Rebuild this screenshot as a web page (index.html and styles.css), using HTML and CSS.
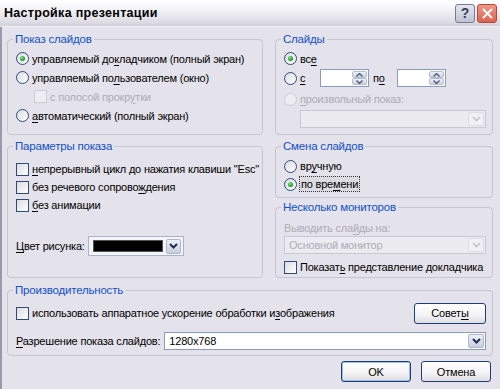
FILE: index.html
```html
<!DOCTYPE html>
<html lang="ru">
<head>
    <meta charset="UTF-8">
    <title>Настройка презентации</title>
    <link rel="stylesheet" href="styles.css">
</head>
<body>
<div class="window">
    <div class="titlebar">
        <span class="title">Настройка презентации</span>
        <div class="caption-btns">
            <span class="cap help">?</span>
            <span class="cap close">
                <svg width="11" height="11" viewBox="0 0 11 11"><path d="M1.5 1.5l8 8M9.5 1.5l-8 8" stroke="#fff" stroke-width="2" stroke-linecap="round"/></svg>
            </span>
        </div>
    </div>

    <div class="content">
        <div class="grid">
            <fieldset class="group g-show">
                <legend>Показ слайдов</legend>
                <div class="opt r19"><span class="radio on"></span><span>управляемый до<u>к</u>ладчиком (полный экран)</span></div>
                <div class="opt r19"><span class="radio"></span><span>управляемый по<u>л</u>ьзователем (окно)</span></div>
                <div class="opt r19 sub disabled"><span class="check off"></span><span>с полосой прокр<u>у</u>тки</span></div>
                <div class="opt r19"><span class="radio"></span><span><u>а</u>втоматический (полный экран)</span></div>
            </fieldset>

            <fieldset class="group g-slides">
                <legend>Слайды</legend>
                <div class="opt r19"><span class="radio on"></span><span>вс<u>е</u></span></div>
                <div class="opt r20">
                    <span class="radio"></span><span class="lbl-c"><u>с</u></span>
                    <span class="spin"><span class="spin-btns">
                        <span class="spin-b"><svg width="7" height="4" viewBox="0 0 7 4"><path d="M0.5 3.5l3-3 3 3" fill="none" stroke="#4d5a78" stroke-width="1.4"/></svg></span>
                        <span class="spin-b"><svg width="7" height="4" viewBox="0 0 7 4"><path d="M0.5 0.5l3 3 3-3" fill="none" stroke="#4d5a78" stroke-width="1.4"/></svg></span>
                    </span></span>
                    <span class="lbl-po">п<u>о</u></span>
                    <span class="spin"><span class="spin-btns">
                        <span class="spin-b"><svg width="7" height="4" viewBox="0 0 7 4"><path d="M0.5 3.5l3-3 3 3" fill="none" stroke="#4d5a78" stroke-width="1.4"/></svg></span>
                        <span class="spin-b"><svg width="7" height="4" viewBox="0 0 7 4"><path d="M0.5 0.5l3 3 3-3" fill="none" stroke="#4d5a78" stroke-width="1.4"/></svg></span>
                    </span></span>
                </div>
                <div class="opt r18 gap2 disabled"><span class="radio off"></span><span><u>п</u>роизвольный показ:</span></div>
                <div class="combo off indent gap2">
                    <span class="combo-text"></span>
                    <span class="drop"><svg width="9" height="6" viewBox="0 0 9 6"><path d="M1 1l3.5 3.5L8 1" fill="none" stroke="#c3c6d0" stroke-width="1.6"/></svg></span>
                </div>
            </fieldset>

            <fieldset class="group g-params">
                <legend>Параметры показа</legend>
                <div class="opt r18"><span class="check"></span><span><u>н</u>епрерывный цикл до нажатия клавиши "Esc"</span></div>
                <div class="opt r18"><span class="check"></span><span>без речевого сопрово<u>ж</u>дения</span></div>
                <div class="opt r18"><span class="check"></span><span><u>б</u>ез анимации</span></div>
                <div class="color-row">
                    <span class="color-lbl"><u>Ц</u>вет рисунка:</span>
                    <span class="color-pick">
                        <span class="swatch"></span>
                        <span class="drop"><svg width="9" height="6" viewBox="0 0 9 6"><path d="M1 1l3.5 3.5L8 1" fill="none" stroke="#1f2f55" stroke-width="2"/></svg></span>
                    </span>
                </div>
            </fieldset>

            <div class="stack">
                <fieldset class="group g-advance">
                    <legend>Смена слайдов</legend>
                    <div class="opt r18"><span class="radio"></span><span>вр<u>у</u>чную</span></div>
                    <div class="opt r18"><span class="radio on"></span><span class="focus">по вре<u>м</u>ени</span></div>
                </fieldset>
                <fieldset class="group g-monitors">
                    <legend>Несколько мониторов</legend>
                    <div class="plain disabled">Выводить сла<u>й</u>ды на:</div>
                    <div class="combo off">
                        <span class="combo-text">Основной монитор</span>
                        <span class="drop"><svg width="9" height="6" viewBox="0 0 9 6"><path d="M1 1l3.5 3.5L8 1" fill="none" stroke="#c3c6d0" stroke-width="1.6"/></svg></span>
                    </div>
                    <div class="opt r18 gap4"><span class="check"></span><span>Показат<u>ь</u> представление докладчика</span></div>
                </fieldset>
            </div>

            <fieldset class="group g-perf">
                <legend>Производительность</legend>
                <div class="perf-row">
                    <div class="opt"><span class="check"></span><span>использовать аппаратное ускорение обработки и<u>з</u>ображения</span></div>
                    <span class="btn tips">Совет<u>ы</u></span>
                </div>
                <div class="res-row">
                    <span class="res-lbl"><u>Р</u>азрешение показа слайдов:</span>
                    <div class="combo grow">
                        <span class="combo-text">1280x768</span>
                        <span class="drop"><svg width="9" height="6" viewBox="0 0 9 6"><path d="M1 1l3.5 3.5L8 1" fill="none" stroke="#1f2f55" stroke-width="2"/></svg></span>
                    </div>
                </div>
            </fieldset>
        </div>

        <div class="actions">
            <span class="btn default">OK</span>
            <span class="btn">Отмена</span>
        </div>
    </div>
</div>
</body>
</html>
```

FILE: styles.css
```css
* {
    box-sizing: border-box;
}
body {
    margin: 0;
    font-family: "Liberation Sans", Arial, sans-serif;
    font-size: 11px;
    letter-spacing: -0.2px;
    color: #000;
    background: #e4e2ea;
}
u {
    text-decoration-thickness: 1px;
    text-underline-offset: 2px;
}
.window {
    width: 500px;
    height: 389px;
    display: flex;
    flex-direction: column;
    background: #e4e2ea;
}

/* title bar */
.titlebar {
    height: 27px;
    display: flex;
    align-items: center;
    justify-content: space-between;
    padding: 0 3px 0 4px;
    background: linear-gradient(#ffffff, #f4f4f7 35%, #dddce4 85%, #d2d1da);
    border-bottom: 1px solid #f0eff4;
}
.title {
    font-weight: bold;
    font-size: 12.5px;
    letter-spacing: 0.3px;
}
.caption-btns {
    display: flex;
    gap: 2px;
}
.cap {
    width: 20px;
    height: 19px;
    border-radius: 3px;
    display: flex;
    align-items: center;
    justify-content: center;
}
.help {
    background: linear-gradient(#e4e6f0, #bfc3d4);
    border: 1px solid #767b93;
    color: #3a3f58;
    font-weight: bold;
    font-size: 14px;
}
.close {
    background: linear-gradient(#f09686, #d9644f);
    border: 1px solid #b24a3a;
}

/* body */
.content {
    flex: 1;
    border-left: 2px solid #9a98ab;
    padding: 5px 7px 0 5px;
}
.grid {
    display: grid;
    grid-template-columns: 256px 218px;
    grid-template-rows: 103px 139px 74px;
    column-gap: 12px;
    row-gap: 4px;
}
.group {
    margin: 0;
    min-width: 0;
    padding: 0 6px 0 8px;
    border: 1px solid #c6c5d0;
    border-radius: 4px;
}
.group legend {
    margin-left: -3px;
    padding: 0 2px;
    line-height: 14px;
    font-size: 11.5px;
    color: #1250c8;
}
.g-show, .g-slides {
    padding-top: 3px;
}
.g-params {
    padding-top: 7px;
}
.g-advance {
    padding-top: 4px;
}
.g-monitors {
    padding-top: 6px;
}
.g-perf {
    grid-column: 1 / -1;
    padding-top: 6px;
    margin-top: 1px;
}
.stack {
    display: flex;
    flex-direction: column;
    gap: 2px;
}
.g-advance {
    height: 59px;
}
.g-monitors {
    flex: 1;
}

/* options */
.opt {
    display: flex;
    align-items: center;
    gap: 3px;
    white-space: nowrap;
}
.r18 { height: 18px; }
.r19 { height: 19px; }
.r20 { height: 20px; }
.gap2 { margin-top: 2px; }
.gap4 { margin-top: 4px; }
.sub {
    padding-left: 18px;
}
.disabled {
    color: #aeacb8;
}
.plain {
    height: 16px;
    line-height: 16px;
}
.radio, .check {
    flex: none;
    width: 13px;
    height: 13px;
    border: 1px solid #2d4a78;
    background: linear-gradient(135deg, #dcdce2, #ffffff);
}
.radio {
    border-radius: 50%;
    display: flex;
    align-items: center;
    justify-content: center;
}
.radio.on::after {
    content: "";
    width: 5px;
    height: 5px;
    border-radius: 50%;
    background: radial-gradient(circle at 40% 35%, #8be58b, #21a121 60%, #1a8a1a);
}
.radio.off, .check.off {
    border-color: #cdccd6;
    background: #eeedf2;
}
.focus {
    outline: 1px dotted #333;
    background: #dcdbe2;
    padding: 0 1px;
    line-height: 14px;
}

/* spin fields */
.lbl-c {
    width: 17px;
}
.lbl-po {
    margin: 0 9px 0 1px;
}
.spin {
    width: 49px;
    height: 18px;
    border: 1px solid #8a9cba;
    background: #fff;
    display: flex;
    justify-content: flex-end;
    padding: 1px;
}
.spin-btns {
    width: 15px;
    display: flex;
    flex-direction: column;
}
.spin-b {
    flex: 1;
    display: flex;
    align-items: center;
    justify-content: center;
    border: 1px solid #b6bdd2;
    border-radius: 2px;
    background: linear-gradient(#eef0f8, #cdd2e2);
}

/* combos */
.combo {
    height: 18px;
    border: 1px solid #8a9cba;
    background: #fff;
    display: flex;
    align-items: center;
    padding: 1px;
}
.combo-text {
    flex: 1;
    padding-left: 3px;
}
.combo.off {
    border-color: #c9c8d3;
    background: #ecebf0;
    color: #aeacb8;
}
.indent {
    margin-left: 16px;
}
.drop {
    width: 16px;
    height: 14px;
    display: flex;
    align-items: center;
    justify-content: center;
    border: 1px solid #aeb6cc;
    border-radius: 2px;
    background: linear-gradient(#eef0f6, #c9cedd);
}
.combo.off .drop {
    border-color: #dddce4;
    background: #f1f0f4;
}

.color-row {
    display: flex;
    align-items: center;
    margin-top: 22px;
    height: 20px;
    white-space: nowrap;
}
.color-lbl {
    width: 72px;
}
.color-pick {
    width: 96px;
    height: 20px;
    display: flex;
    align-items: center;
    gap: 3px;
    padding: 0 2px 0 4px;
    border: 1px solid #a6b4cc;
    background: #f4f4f8;
}
.swatch {
    flex: 1;
    height: 12px;
    background: #000;
    border: 1px solid #555;
}
.color-pick .drop {
    width: 15px;
    height: 15px;
}

/* perf */
.perf-row {
    display: flex;
    align-items: center;
    justify-content: space-between;
    height: 20px;
}
.res-row {
    display: flex;
    align-items: center;
    gap: 4px;
    margin-top: 9px;
    white-space: nowrap;
}
.grow {
    flex: 1;
}

/* buttons */
.btn {
    display: flex;
    align-items: center;
    justify-content: center;
    height: 21px;
    width: 70px;
    border: 1px solid #1f3f72;
    border-radius: 3px;
    background: linear-gradient(#ffffff, #f3f3f5 60%, #dcdce2);
}
.tips {
    width: 72px;
}
.default {
    box-shadow: inset 0 0 0 1px #9cbde8;
}
.actions {
    display: flex;
    justify-content: flex-end;
    gap: 10px;
    margin-top: 5px;
    padding-right: 2px;
}
```
